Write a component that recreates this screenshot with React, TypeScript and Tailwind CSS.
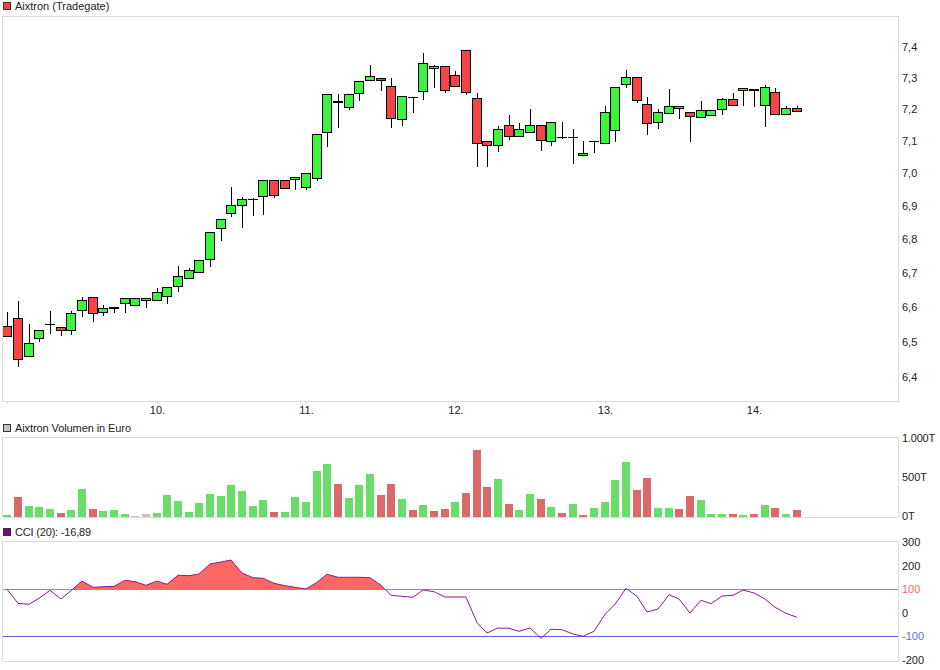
import React from "react";

type Candle = [number, number, number, number, number, "r" | "g"];

// x, wick top, body top, body bottom, wick bottom, colour
const candles: Candle[] = [
  [7, 312, 326, 337, 337, "r"], [18, 301, 318, 360, 367, "r"], [29, 324, 343, 357, 357, "g"],
  [39, 330, 330, 339, 342, "g"], [50, 311, 324, 324, 334, "g"], [61, 327, 327, 331, 336, "r"],
  [71, 311, 313, 331, 335, "g"], [82, 297, 300, 311, 317, "g"], [93, 297, 297, 314, 322, "r"],
  [103, 305, 308, 313, 316, "g"], [114, 307, 307, 309, 313, "g"], [125, 298, 298, 304, 313, "g"],
  [135, 298, 298, 306, 306, "g"], [146, 298, 298, 301, 308, "g"], [157, 288, 292, 301, 301, "g"],
  [167, 287, 287, 297, 304, "g"], [178, 266, 276, 287, 292, "g"], [189, 268, 270, 279, 279, "g"],
  [199, 260, 260, 273, 273, "g"], [210, 232, 232, 260, 267, "g"], [221, 219, 219, 229, 241, "g"],
  [231, 187, 205, 214, 217, "g"], [242, 197, 199, 206, 228, "g"], [253, 198, 199, 199, 216, "g"],
  [263, 180, 180, 197, 215, "g"], [274, 180, 180, 196, 198, "r"], [285, 180, 180, 189, 189, "r"],
  [295, 177, 177, 180, 190, "g"], [306, 173, 173, 188, 190, "g"], [317, 134, 134, 179, 181, "g"],
  [327, 94, 94, 133, 147, "g"], [338, 94, 101, 103, 128, "g"], [349, 94, 94, 108, 110, "g"],
  [359, 81, 81, 94, 101, "g"], [370, 65, 76, 81, 81, "g"], [381, 78, 78, 81, 91, "r"],
  [391, 78, 86, 119, 128, "r"], [402, 96, 96, 120, 126, "g"], [413, 97, 97, 97, 113, "g"],
  [423, 53, 63, 92, 100, "g"], [434, 65, 66, 69, 88, "g"], [445, 66, 66, 91, 93, "r"],
  [455, 71, 75, 87, 87, "r"], [466, 50, 50, 93, 95, "r"], [477, 93, 98, 144, 167, "r"],
  [487, 141, 141, 146, 167, "r"], [498, 126, 129, 146, 152, "g"], [509, 115, 125, 137, 140, "r"],
  [519, 123, 129, 137, 137, "g"], [530, 109, 125, 133, 133, "g"], [541, 125, 125, 141, 151, "r"],
  [551, 122, 122, 142, 146, "g"], [562, 122, 137, 137, 139, "g"], [573, 129, 137, 137, 164, "g"],
  [583, 141, 153, 156, 156, "g"], [594, 141, 141, 141, 153, "g"], [605, 106, 112, 144, 144, "g"],
  [615, 87, 87, 131, 142, "g"], [626, 70, 77, 85, 88, "g"], [637, 77, 77, 101, 103, "r"],
  [647, 97, 104, 124, 135, "r"], [658, 109, 112, 123, 129, "g"], [669, 89, 106, 114, 114, "g"],
  [679, 106, 106, 109, 119, "g"], [690, 112, 112, 117, 142, "r"], [701, 101, 110, 118, 118, "g"],
  [711, 110, 110, 116, 116, "g"], [722, 98, 99, 110, 115, "g"], [733, 93, 99, 106, 106, "r"],
  [743, 88, 88, 91, 106, "g"], [754, 89, 89, 91, 107, "g"], [765, 85, 87, 106, 127, "g"],
  [775, 88, 92, 115, 115, "r"], [786, 106, 108, 115, 115, "g"], [797, 106, 108, 112, 112, "r"],
];

const volumes: [number, "r" | "g" | "n"][] = [
  [2, "g"], [20, "r"], [11, "g"], [10, "g"], [8, "g"], [4, "r"], [7, "g"], [28, "g"], [8, "r"], [6, "g"],
  [7, "g"], [3, "g"], [1, "n"], [3, "n"], [4, "g"], [22, "g"], [16, "g"], [5, "g"], [14, "g"], [23, "g"],
  [21, "g"], [32, "g"], [26, "g"], [11, "g"], [17, "g"], [5, "r"], [5, "g"], [20, "g"], [15, "g"], [46, "g"],
  [53, "g"], [33, "r"], [19, "g"], [32, "g"], [43, "g"], [22, "r"], [33, "r"], [18, "g"], [7, "r"], [12, "g"],
  [6, "r"], [8, "r"], [15, "g"], [24, "r"], [67, "r"], [30, "r"], [38, "g"], [13, "r"], [7, "g"], [23, "g"],
  [18, "r"], [10, "g"], [4, "r"], [13, "g"], [2, "r"], [9, "g"], [15, "g"], [37, "g"], [55, "g"], [27, "r"],
  [39, "r"], [9, "g"], [9, "g"], [8, "r"], [21, "r"], [17, "g"], [3, "g"], [3, "g"], [3, "r"], [2, "g"],
  [3, "r"], [12, "g"], [9, "r"], [3, "g"], [7, "r"],
];

const cci = [
  589.3, 603.3, 604.3, 598.3, 590.3, 599, 590.7, 581, 587.3, 586.7, 586.3, 580.3, 581.7, 585.3, 581,
  584.3, 575.3, 575.7, 574, 564, 562, 560, 573, 577.7, 578.3, 583.3, 585.7, 587.3, 589, 582.3,
  574.3, 577.3, 577.3, 577.3, 577.7, 585.3, 595.3, 596.3, 597.3, 590, 591.7, 597, 597, 597, 622.7,
  633, 628, 628.3, 631.3, 628, 638.3, 629.3, 629.7, 634, 636.3, 631.3, 614.3, 604.3, 588.3, 596.3,
  612, 609, 594.7, 599, 613, 600.3, 603.7, 596, 595.3, 590, 593, 599, 607.3, 613.3, 617.3,
];

const cciLine = cci.map((y, i) => `${candles[i][0]},${y}`).join(" ");
const cciArea = `71,589.3 ${cci.slice(6, 37).map((y, i) => `${candles[i + 6][0]},${y}`).join(" ")} 391,589.3`;

const priceLabels = [
  { text: "7,4", cls: "h-[31px]" }, { text: "7,3", cls: "h-[31px]" }, { text: "7,2", cls: "h-[32px]" },
  { text: "7,1", cls: "h-[32px]" }, { text: "7,0", cls: "h-[33px]" }, { text: "6,9", cls: "h-[33px]" },
  { text: "6,8", cls: "h-[34px]" }, { text: "6,7", cls: "h-[34px]" }, { text: "6,6", cls: "h-[35px]" },
  { text: "6,5", cls: "h-[35px]" }, { text: "6,4", cls: "h-[12px]" },
];

const cciLabels = [
  { text: "300", cls: "h-[24px]" }, { text: "200", cls: "h-[23px]" },
  { text: "100", cls: "h-[24px] text-[#ff6666]" }, { text: "0", cls: "h-[23px]" },
  { text: "-100", cls: "h-[24px] text-[#6666ff]" }, { text: "-200", cls: "h-[12px]" },
];

const volumeColor = { r: "#dc6969", g: "#69dc69", n: "#c4c4c4" };

const Legend = ({ swatch, className, children }: { swatch: string; className: string; children: React.ReactNode }) => (
  <div className={`flex items-start pl-[3px] gap-[4px] ${className}`}>
    <span className={`w-2 h-2 mt-[2px] border border-[#333] ${swatch}`} />
    <span className="leading-[12px]">{children}</span>
  </div>
);

export default function App() {
  return (
    <div className="w-[940px] h-[670px] bg-white text-[11px] text-[#222] [font-family:'Liberation_Sans',Arial,sans-serif] overflow-hidden">
      <Legend swatch="bg-[#f44444]" className="h-4">Aixtron (Tradegate)</Legend>

      <div className="flex pl-[2px]">
        <div className="w-[897px] h-[386px] border border-[#dcdcdc]">
          <svg width="895" height="384" viewBox="3 17 895 384" className="block" shapeRendering="crispEdges">
            {candles.map(([x, wt, t, b, wb, c]) => (
              <g key={x}>
                <line x1={x + 0.5} x2={x + 0.5} y1={wt} y2={wb} stroke="#000" />
                {t === b ? (
                  <line x1={x - 5} x2={x + 5} y1={t + 0.5} y2={t + 0.5} stroke="#000" />
                ) : (
                  <rect
                    x={x - 4.5}
                    y={t + 0.5}
                    width={9}
                    height={b - t - 1}
                    fill={c === "r" ? "#f44444" : "#3cf43c"}
                    stroke="#000"
                  />
                )}
              </g>
            ))}
          </svg>
        </div>
        <div className="pl-[3px] pt-[25px]">
          {priceLabels.map((l) => (
            <div key={l.text} className={`leading-[12px] ${l.cls}`}>{l.text}</div>
          ))}
        </div>
      </div>

      <div className="h-[20px]">
        <svg width="940" height="2" viewBox="0 402 940 2" className="block" shapeRendering="crispEdges">
          {[7, 157, 306, 455, 605, 754].map((x) => (
            <line key={x} x1={x + 0.5} x2={x + 0.5} y1={402} y2={404} stroke="#dcdcdc" />
          ))}
        </svg>
        <div className="flex pl-[83px] leading-[12px]">
          <span className="w-[149px] text-center">10.</span>
          <span className="w-[149px] text-center">11.</span>
          <span className="w-[150px] text-center">12.</span>
          <span className="w-[149px] text-center">13.</span>
          <span className="w-[149px] text-center">14.</span>
        </div>
      </div>

      <Legend swatch="bg-[#c4c4c4]" className="h-[15px] tracking-[-0.09px]">Aixtron Volumen in Euro</Legend>

      <div className="flex pl-[2px] h-[89px]">
        <div className="w-[897px] h-[81px] border border-[#dcdcdc]">
          <svg width="895" height="79" viewBox="3 438 895 79" className="block" shapeRendering="crispEdges">
            {volumes.map(([h, c], i) => (
              <rect key={i} x={candles[i][0] - 4} y={517 - h} width={8} height={h} fill={volumeColor[c]} />
            ))}
          </svg>
        </div>
        <div className="pl-[3px] -mt-[5px]">
          <div className="h-[39px] leading-[12px] tracking-[-0.2px]">1.000T</div>
          <div className="h-[39px] leading-[12px]">500T</div>
          <div className="leading-[12px]">0T</div>
        </div>
      </div>

      <Legend swatch="bg-[#800080]" className="h-[15px] tracking-[-0.18px]">CCI (20): -16,89</Legend>

      <div className="flex pl-[2px]">
        <div className="w-[897px] h-[121px] border border-[#dcdcdc]">
          <svg width="895" height="119" viewBox="3 542 895 119" className="block">
            <polygon points={cciArea} fill="#ff6666" clipPath="url(#above100)" />
            <clipPath id="above100">
              <rect x="3" y="542" width="895" height="47.5" />
            </clipPath>
            <line x1="3" x2="898" y1="589.5" y2="589.5" stroke="#ff6666" />
            <line x1="3" x2="898" y1="636.5" y2="636.5" stroke="#6666e0" />
            <polyline points={cciLine} fill="none" stroke="#8b1a96" strokeWidth="1" />
          </svg>
        </div>
        <div className="pl-[3px] -mt-[5px]">
          {cciLabels.map((l) => (
            <div key={l.text} className={`leading-[12px] ${l.cls}`}>{l.text}</div>
          ))}
        </div>
      </div>
    </div>
  );
}
